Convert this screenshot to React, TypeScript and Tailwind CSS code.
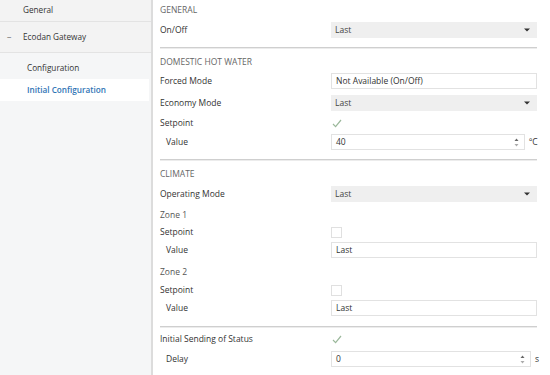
const FONT = { fontFamily: '"Open Sans", "Noto Sans", sans-serif' };

const Dropdown = ({ value }: { value: string }) => (
  <div className="w-[206px] h-[16px] bg-[#efefef] flex items-center justify-between pl-[4px] pr-[7px] text-[#444]">
    <span>{value}</span>
    <svg width="6" height="4" viewBox="0 0 6 4">
      <path d="M0 0.5 L6 0.5 L3 3.5 Z" fill="#333" />
    </svg>
  </div>
);

const TextBox = ({ value }: { value: string }) => (
  <div className="w-[206px] h-[16px] bg-white border border-[#e2e2e2] flex items-center pl-[4px] text-[#333]">{value}</div>
);

const Spin = ({ value, width, unit }: { value: string; width: string; unit: string }) => (
  <div className="flex items-center">
    <div className={`${width} h-[16px] bg-white border border-[#e2e2e2] flex items-center justify-between pl-[4px] pr-[5px] text-[#333]`}>
      <span>{value}</span>
      <svg width="5" height="9" viewBox="0 0 5 9">
        <path d="M0.5 3 L4.5 3 L2.5 0.5 Z" fill="#666" />
        <path d="M0.5 6 L4.5 6 L2.5 8.5 Z" fill="#aaa" />
      </svg>
    </div>
    <span className="ml-[4px] text-[#333]">{unit}</span>
  </div>
);

const Check = ({ checked }: { checked: boolean }) =>
  checked ? (
    <div className="w-[11px] h-[11px] flex items-center justify-center">
      <svg width="10" height="9" viewBox="0 0 10 9">
        <path d="M1 5 L3.6 7.6 L9 1" stroke="#9bb89b" strokeWidth="1.2" fill="none" />
      </svg>
    </div>
  ) : (
    <div className="w-[11px] h-[11px] border border-[#e0e0e0] bg-white" />
  );

const Row = ({
  label,
  indent,
  h,
  children,
}: {
  label: string;
  indent?: boolean;
  h: string;
  children?: React.ReactNode;
}) => (
  <div className={`flex items-center shrink-0 ${h}`}>
    <div className={`w-[171px] shrink-0 text-[#333] ${indent ? 'pl-[6px]' : ''}`}>{label}</div>
    {children}
  </div>
);

const Heading = ({ label, h }: { label: string; h: string }) => (
  <div className={`flex items-center shrink-0 ${h} text-[#666] uppercase`}>{label}</div>
);

const Divider = () => <div className="w-[377px] h-[1px] shrink-0 bg-[#cfcfcf] shadow-[0_1px_0_#ececec]" />;

export default function App() {
  return (
    <div className="w-[550px] h-[375px] flex bg-white text-[8.5px] overflow-hidden" style={FONT}>
      <div className="w-[153px] shrink-0 bg-[#f5f6f7] border-r-[2px] border-[#dcdcdc] flex flex-col text-[#333] text-[8.2px]">
        <div className="h-[22px] flex items-center pl-[23px] border-b border-[#e3e3e3] bg-[#f3f3f3]">General</div>
        <div className="h-[31px] flex items-center border-b border-[#e3e3e3] bg-[#f3f3f3] pt-[1px]">
          <span className="w-[23px] pl-[7px] text-[#555]">−</span>
          <span>Ecodan Gateway</span>
        </div>
        <div className="h-[26px] flex items-center pl-[27px] pt-[4px]">Configuration</div>
        <div className="h-[22px] flex items-center pl-[27px] bg-white text-[#2f74b5] font-semibold mr-[2px]">
          Initial Configuration
        </div>
      </div>

      <div className="flex-1 pl-[7px] pt-[1px] flex flex-col">
        <Heading label="General" h="h-[18px]" />
        <Row label="On/Off" h="h-[22px]">
          <Dropdown value="Last" />
        </Row>
        <div className="h-[6px] shrink-0" />
        <Divider />
        <Heading label="Domestic Hot Water" h="h-[25px] pt-[3px]" />
        <Row label="Forced Mode" h="h-[16px]">
          <TextBox value="Not Available (On/Off)" />
        </Row>
        <Row label="Economy Mode" h="h-[28px]">
          <Dropdown value="Last" />
        </Row>
        <Row label="Setpoint" h="h-[12px]">
          <Check checked />
        </Row>
        <Row label="Value" indent h="h-[26px]">
          <Spin value="40" width="w-[194px]" unit="ºC" />
        </Row>
        <div className="h-[4px] shrink-0" />
        <Divider />
        <Heading label="Climate" h="h-[26px] pt-[2px]" />
        <Row label="Operating Mode" h="h-[16px]">
          <Dropdown value="Last" />
        </Row>
        <div className="flex items-center shrink-0 h-[24px] pt-[2px] text-[#555]">Zone 1</div>
        <Row label="Setpoint" h="h-[12px]">
          <Check checked={false} />
        </Row>
        <Row label="Value" indent h="h-[24px]">
          <TextBox value="Last" />
        </Row>
        <div className="flex items-center shrink-0 h-[20px] text-[#555]">Zone 2</div>
        <Row label="Setpoint" h="h-[16px]">
          <Check checked={false} />
        </Row>
        <Row label="Value" indent h="h-[20px]">
          <TextBox value="Last" />
        </Row>
        <div className="h-[8px] shrink-0" />
        <Divider />
        <Row label="Initial Sending of Status" h="h-[24px]">
          <Check checked />
        </Row>
        <Row label="Delay" indent h="h-[16px]">
          <Spin value="0" width="w-[200px]" unit="s" />
        </Row>
      </div>
    </div>
  );
}
